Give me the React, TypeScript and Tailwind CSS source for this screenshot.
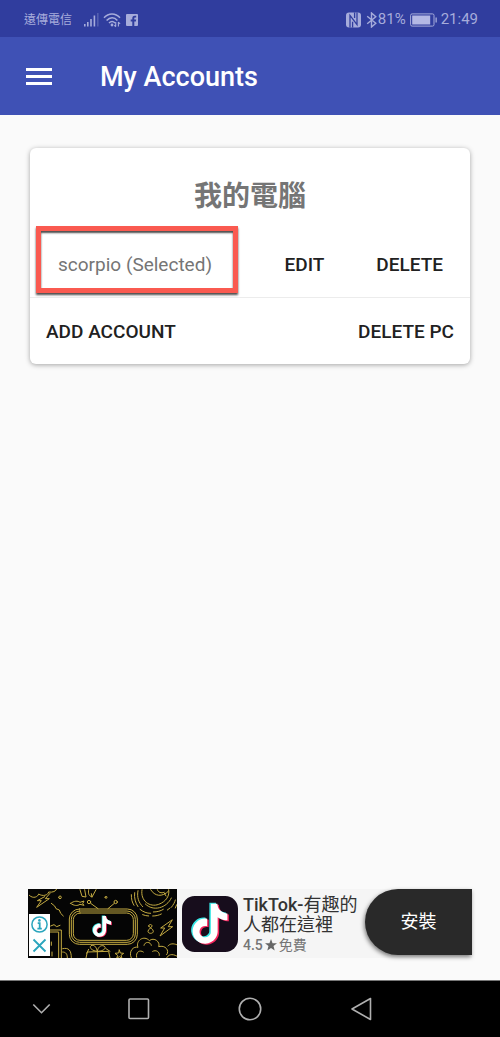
import React, { useState } from 'react';

const NOTE_PATH =
  'M12.525.02c1.31-.02 2.61-.01 3.91-.02.08 1.53.63 3.09 1.75 4.17 1.12 1.11 2.7 1.62 4.24 1.79v4.03c-1.44-.05-2.89-.35-4.2-.97-.57-.26-1.1-.59-1.62-.93-.01 2.92.01 5.84-.02 8.75-.08 1.4-.54 2.79-1.35 3.94-1.31 1.92-3.58 3.17-5.91 3.21-1.43.08-2.86-.31-4.08-1.03-2.02-1.19-3.44-3.37-3.65-5.71-.02-.5-.03-1-.01-1.49.18-1.9 1.12-3.72 2.58-4.96 1.66-1.44 3.98-2.13 6.15-1.72.02 1.48-.04 2.96-.04 4.44-.99-.32-2.15-.23-3.02.37-.63.41-1.11 1.04-1.36 1.75-.21.51-.15 1.07-.14 1.61.24 1.64 1.82 3.02 3.5 2.87 1.12-.01 2.19-.66 2.77-1.61.19-.33.4-.67.41-1.06.1-1.79.06-3.57.07-5.36.01-4.03-.01-8.05.02-12.07z';

const Note: React.FC<{ x: number; y: number; scale: number }> = ({ x, y, scale }) => (
  <g transform={`translate(${x} ${y}) scale(${scale})`} stroke="none">
    <path d={NOTE_PATH} fill="#f5245c" transform="translate(.9 .6)" />
    <path d={NOTE_PATH} fill="#35e6e4" transform="translate(-.9 -.6)" />
    <path d={NOTE_PATH} fill="#fff" />
  </g>
);

const StatusBar: React.FC = () => (
  <div className="flex h-[37px] items-center justify-between bg-[#303d9e] pl-6 pr-[22px] pt-0.5 text-[15px] text-[#a6acdb]">
    <div className="flex items-center">
      <span className="mr-3 text-xs">遠傳電信</span>
      <svg className="mr-1 h-[15px] w-[15px]" viewBox="0 0 15 15" fill="currentColor">
        <path d="M0 12h1.6v2.5H0zM3 10h1.6v4.5H3zM6.2 7h1.6v7.5H6.2zM9.6 3.5h1.6v11H9.6z" />
        <path d="M13 1h1.6v13.5H13z" opacity=".3" />
      </svg>
      <svg className="mr-1 h-4 w-[19px]" viewBox="0 0 19 16" fill="none" stroke="currentColor" strokeWidth="1.5">
        <path d="M1 5.8C5.6.7 12.4.7 17 5.8M3.6 8.5c3.4-3.7 7.6-3.7 10.8-.1M6 11c2-2 4.2-2 6 0" />
        <circle cx="9" cy="13" r="1.4" fill="currentColor" stroke="none" />
        <path d="M12.7 10v4.5M11.4 13.2l1.3 1.6M15.4 14.5V10M15.4 10l1.7 2" strokeWidth="1.1" />
      </svg>
      <svg className="h-3 w-3" viewBox="0 0 12 12">
        <rect width="12" height="12" rx="1" fill="currentColor" />
        <path d="M6.3 12V7.5H4.7V5.6h1.6V4.3c0-1.7 1-2.5 2.5-2.5h1.4v1.8h-.9c-.8 0-1 .4-1 1v1h1.9l-.3 1.9H8.3V12z" fill="#303d9e" />
      </svg>
    </div>
    <div className="flex items-center">
      <svg className="mr-1 h-4 w-4" viewBox="0 0 16 16">
        <rect y=".5" width="15" height="15" rx="3" fill="currentColor" />
        <path d="M4 15.5V3.4l7 9.2V.5M6.6 15.5V9.8M8.6 .5v5.6" fill="none" stroke="#303d9e" strokeWidth="1.3" />
      </svg>
      <svg className="h-4 w-3" viewBox="0 0 12 16" fill="none" stroke="currentColor" strokeWidth="1.4">
        <path d="M1.2 4.3l8.6 7L5.5 15V1l4.3 3.7-8.6 7" />
      </svg>
      <span>81%</span>
      <svg className="mx-1 h-[14px] w-[27px]" viewBox="0 0 27 14">
        <rect x=".6" y=".9" width="23.4" height="12.2" rx="1.5" fill="none" stroke="currentColor" strokeWidth="1" />
        <rect x="2.2" y="2.5" width="18" height="9" fill="#b3b8e4" />
        <path d="M25.5 4.5h1.3v5h-1.3z" fill="currentColor" />
      </svg>
      <span>21:49</span>
    </div>
  </div>
);

const AdArt: React.FC = () => (
  <svg className="h-[69px] w-[149px] shrink-0" viewBox="24 27 447 207" fill="none" stroke="#c4ab42" strokeWidth="3" strokeLinecap="round" strokeLinejoin="round">
    <rect x="24" y="27" width="447" height="207" fill="#050505" stroke="none" />
    {/* tv screen */}
    <rect x="148" y="87" width="204" height="106" rx="30" />
    <rect x="154" y="93" width="192" height="94" rx="25" />
    <rect x="160" y="99" width="180" height="82" rx="20" />
    <path d="M234 86L212 70M264 86l19-16" />
    <circle cx="207" cy="66" r="5" />
    <circle cx="287" cy="66" r="5" />
    {/* cloud and lightning */}
    <path d="M28 46c12 12 26 4 28-4 12 8 28 4 30-6 12 2 22-2 24-9M74 50L52 62h12L50 82l38-26H76l14-16M116 52a4 4 0 1 0 8 0 4 4 0 1 0-8 0M94 70l10 8 4 8 10 4 4 10 8 8" />
    <path d="M152 70c10-8 22-8 28-3l12-4-4 8 4 5-12-3c-8 5-18 5-28-3zM180 29l6 20 12 2-4-22M206 29c-2 12 0 18 10 22l12-22M216 51l-2-10M255 52a3 3 0 1 0 6 0 3 3 0 1 0-6 0" />
    {/* moon with rays */}
    <path d="M366 29c-6 34 24 54 50 44 22-8 34-26 30-44M392 29c12 20 34 24 54 4M412 29c2 8 12 12 20 8M438 48l-6-10M376 72c24 24 64 12 78-18" />
    <path d="M354 32c-4 20 2 36 14 48M344 38c-2 16 2 30 10 42M334 44c0 14 2 22 8 32M360 88c10 8 20 12 32 12M400 96c12 0 22-3 30-8M368 104c6 2 12 4 18 4M398 108c10 0 18-2 26-6M454 82c6-8 10-14 12-22M442 90l8-6M466 84l4-10" />
    <path d="M456 120l-34 24h12l-14 24 38-28h-12zM386 138c0-6 10-6 10 0s-12 8-12 16 16 8 16 0-12-10-14-16z" />
    {/* cloud at the bottom */}
    <path d="M334 234c-10-22 8-36 20-32-8-20 18-38 34-20 14-12 34 4 28 18 20-6 34 12 24 24M350 232c-4-16 10-24 20-16M372 196c2-12 20-12 22 0M398 214c10-6 22 2 20 12M440 234c4-10 16-14 30-6M444 198c6-8 16-8 26-4" />
    {/* gift and star */}
    <path d="M198 234l4-18 64-2 4 20M232 216v18M232 214c-22-2-26-16-16-18 8-2 14 8 16 18 2-12 10-20 20-16 10 6-2 16-20 16zM206 208l-6 12M258 206l12 8" />
    <path d="M298 210l3 9 10 1-8 6 3 9-8-5-8 5 3-9-8-6 10-1z" />
    {/* mug */}
    <path d="M90 150h34v84M90 156h26v78M92 138l10-4 8 6 10-4M128 206c18-4 26 4 26 28M128 216c10 0 14 6 14 18M94 186v10M96 216v12" />
    <Note x={215} y={108} scale={2.6} />
  </svg>
);

const AdBanner: React.FC = () => (
  <aside className="mx-7 mb-[22px] flex h-[69px] bg-[#f5f5f5]">
    <div className="relative">
      <AdArt />
      {/* ad choices */}
      <div className="absolute bottom-0.5 left-px w-[21px] bg-white">
        <a href="#info" aria-label="Ad info" className="block">
          <svg className="h-[21px] w-[21px]" viewBox="0 0 21 21" fill="none" stroke="#2aa5bd">
            <circle cx="10.5" cy="10.5" r="7.6" strokeWidth="1.5" />
            <path d="M8.7 9.2h2v5M8.4 14.6h4.4" strokeWidth="1.8" />
            <circle cx="10.4" cy="6.4" r="1.3" fill="#2aa5bd" stroke="none" />
          </svg>
        </a>
        <button aria-label="Close ad" className="block">
          <svg className="h-[21px] w-[21px]" viewBox="0 0 21 21" fill="none" stroke="#2aa5bd" strokeWidth="1.8">
            <path d="M4.5 4.5l12 12M16.5 4.5l-12 12" />
          </svg>
        </button>
      </div>
    </div>
    <svg className="ml-[5px] h-14 w-14 shrink-0 self-center" viewBox="0 0 168 168">
      <rect width="168" height="168" rx="38" fill="#170d1c" />
      <Note x={24} y={23} scale={5} />
    </svg>
    <div className="ml-[5px] min-w-0 flex-1 pt-1.5 text-[#333]">
      <p className="text-lg leading-5 whitespace-nowrap">
        <span className="font-medium">TikTok-</span>有趣的
        <br />
        人都在這裡
      </p>
      <p className="flex items-center text-sm leading-5 text-[#757575]">
        <span className="font-medium">4.5</span>
        <svg className="mx-0.5 h-3 w-3" viewBox="0 0 24 24" fill="#666">
          <path d="M12 0l3.1 8.3 8.9.4-7 5.5 2.4 8.6L12 17.9l-7.4 4.9L7 14.2 0 8.7l8.9-.4z" />
        </svg>
        免費
      </p>
    </div>
    <button className="h-[66px] w-[107px] shrink-0 rounded-l-full bg-[#292929] text-lg text-white shadow-[-1px_2px_4px_rgba(0,0,0,0.5)]">
      安裝
    </button>
  </aside>
);

const NavBar: React.FC = () => (
  <nav className="grid h-[57px] grid-cols-[83fr_111fr_111fr_111fr_84fr] border-t border-[#777] bg-black">
    <button aria-label="Hide" className="flex items-center justify-center">
      <svg className="h-6 w-6" viewBox="0 0 24 24" fill="none" stroke="#b0b0b0" strokeWidth="1.6">
        <path d="M3.3 7.5l8.2 8.2 8.2-8.2" />
      </svg>
    </button>
    <button aria-label="Recent apps" className="flex items-center justify-center">
      <svg className="h-6 w-6" viewBox="0 0 24 24" fill="none" stroke="#b0b0b0" strokeWidth="1.6">
        <rect x="2" y="2" width="19.5" height="19.5" rx="1" />
      </svg>
    </button>
    <button aria-label="Home" className="flex items-center justify-center">
      <svg className="h-6 w-6" viewBox="0 0 24 24" fill="none" stroke="#b0b0b0" strokeWidth="1.6">
        <circle cx="12" cy="12" r="10.7" />
      </svg>
    </button>
    <button aria-label="Back" className="flex items-center justify-center">
      <svg className="h-6 w-6" viewBox="0 0 24 24" fill="none" stroke="#b0b0b0" strokeWidth="1.6" strokeLinejoin="round">
        <path d="M21.5 1.5v21L3 12z" />
      </svg>
    </button>
  </nav>
);

const App: React.FC = () => {
  const [selected] = useState(true);

  return (
    <div className="flex min-h-screen flex-col bg-[#fafafa] font-['Roboto','Noto_Sans_CJK_TC',sans-serif]">
      <StatusBar />
      <header className="flex h-[78px] items-center bg-[#3f51b5] pl-[26px] pt-0.5 text-white">
        <button aria-label="Menu">
          <svg className="h-[18px] w-[26px]" viewBox="0 0 26 18" fill="currentColor">
            <path d="M0 0h26v3H0zM0 7h26v3H0zM0 14h26v3H0z" />
          </svg>
        </button>
        <h1 className="ml-12 text-[27px] font-medium">My Accounts</h1>
      </header>

      <main className="flex-1 px-[30px] pt-[33px]">
        <section className="rounded-md bg-white text-[19px] shadow-[0_1px_5px_rgba(0,0,0,0.35)]">
          <h2 className="flex h-[83px] items-center justify-center pt-3.5 text-[28px] font-bold text-[#757575]">我的電腦</h2>
          <div className="flex h-[67px] items-center justify-between border-b border-[#ececec] pl-1.5 pr-[27px] pt-0.5">
            <div className="relative flex items-center self-stretch pl-[22px] pr-[26px] text-[#757575]">
              scorpio {selected && '(Selected)'}
              <span className="absolute inset-x-0 -top-[7px] bottom-1 border-[5px] border-[#fa5a50] shadow-[0_2px_2px_rgba(0,0,0,0.7),inset_0_2px_2px_rgba(0,0,0,0.7)]" />
            </div>
            <div className="flex gap-[52px] font-medium text-[#212121]">
              <button>EDIT</button>
              <button>DELETE</button>
            </div>
          </div>
          <div className="flex h-[66px] items-center justify-between px-4 pt-0.5 font-medium text-[#212121]">
            <button>ADD ACCOUNT</button>
            <button>DELETE PC</button>
          </div>
        </section>
      </main>

      <AdBanner />
      <NavBar />
    </div>
  );
};

export default App;
